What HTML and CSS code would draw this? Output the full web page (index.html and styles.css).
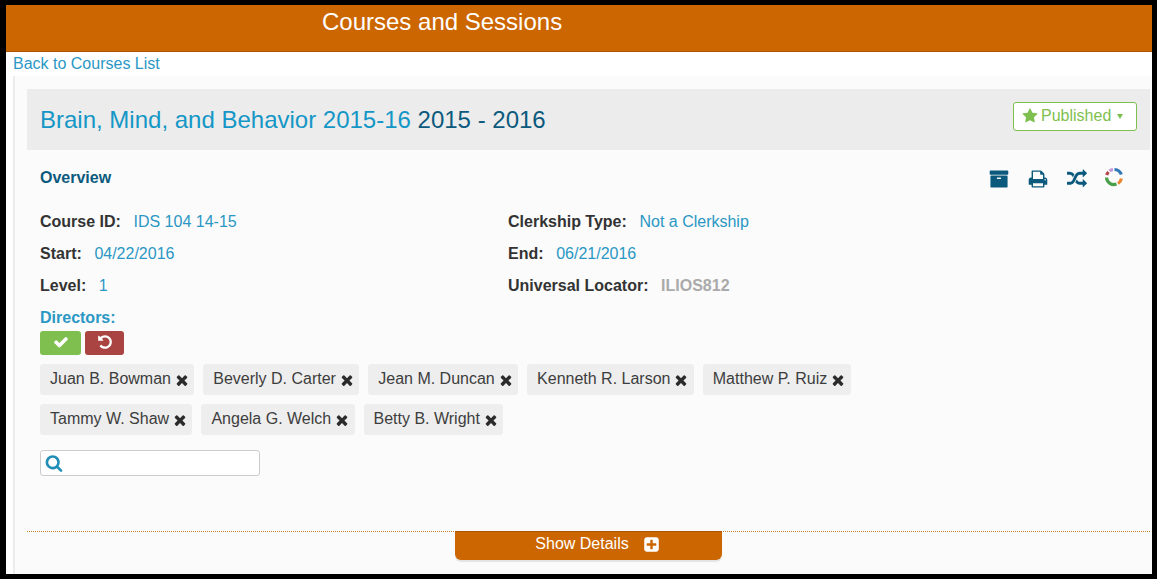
FILE: index.html
```html
<!DOCTYPE html>
<html lang="en">
<head>
    <meta charset="UTF-8">
    <title>Courses and Sessions</title>
    <link rel="stylesheet" href="styles.css">
</head>
<body>
    <svg class="icon-defs" xmlns="http://www.w3.org/2000/svg">
        <symbol id="i-star" viewBox="0 0 1792 1792"><path d="M1728 647q0 22-26 48l-363 354 86 500q1 7 1 20 0 21-10.500 35.500t-30.500 14.500q-19 0-40-12l-449-236-449 236q-22 12-40 12-21 0-31.500-14.500t-10.500-35.500q0-6 2-20l86-500-364-354q-25-27-25-48 0-37 56-46l502-73 225-455q19-41 49-41t49 41l225 455 502 73q56 9 56 46z"/></symbol>
        <symbol id="i-archive" viewBox="0 0 1792 1792"><path d="M1088 832q0-26-19-45t-45-19h-256q-26 0-45 19t-19 45 19 45 45 19h256q26 0 45-19t19-45zm576-192v960q0 26-19 45t-45 19h-1408q-26 0-45-19t-19-45v-960q0-26 19-45t45-19h1408q26 0 45 19t19 45zm64-448v256q0 26-19 45t-45 19h-1536q-26 0-45-19t-19-45v-256q0-26 19-45t45-19h1536q26 0 45 19t19 45z"/></symbol>
        <symbol id="i-print" viewBox="0 0 1792 1792"><path d="M448 1536h896v-256h-896v256zm0-640h896v-384h-160q-40 0-68-28t-28-68v-160h-640v640zm1152 64q0-26-19-45t-45-19-45 19-19 45 19 45 45 19 45-19 19-45zm128 0v416q0 13-9.500 22.500t-22.500 9.500h-224v160q0 40-28 68t-68 28h-960q-40 0-68-28t-28-68v-160h-224q-13 0-22.500-9.500t-9.500-22.500v-416q0-79 56.500-135.500t135.500-56.500h64v-544q0-40 28-68t68-28h672q40 0 88 20t76 48l152 152q28 28 48 76t20 88v256h64q79 0 135.500 56.500t56.500 135.500z"/></symbol>
        <symbol id="i-random" viewBox="0 0 1792 1792"><path d="M666 481q-60 92-137 273-22-45-37-72.500t-40.500-63.500-51-56.500-63-35-81.500-14.500h-224q-14 0-23-9t-9-23v-192q0-14 9-23t23-9h224q250 0 410 225zm1126 799q0 14-9 23l-320 320q-9 9-23 9-13 0-22.500-9.500t-9.500-22.500v-192q-32 0-85 .5t-81 1-73-1-71-5-64-10.500-63-18.500-58-28.500-59-40-55-53.500-56-69.500q59-93 136-273 22 45 37 72.500t40.500 63.500 51 56.500 63 35 81.500 14.500h256v-192q0-14 9-23t23-9q12 0 24 10l319 319q9 9 9 23zm0-896q0 14-9 23l-320 320q-9 9-23 9-13 0-22.500-9.500t-9.500-22.500v-192h-256q-48 0-87 15t-69 45-51 61.500-45 77.500q-32 62-78 171-29 66-49.500 111t-54 105-64 100-74 83-90 68.500-106.500 42-128 16.500h-224q-14 0-23-9t-9-23v-192q0-14 9-23t23-9h224q48 0 87-15t69-45 51-61.500 45-77.500q32-62 78-171 29-66 49.500-111t54-105 64-100 74-83 90-68.500 106.500-42 128-16.500h256v-192q0-14 9-23t23-9q12 0 24 10l319 319q9 9 9 23z"/></symbol>
        <symbol id="i-check" viewBox="0 0 1792 1792"><path d="M1671 566q0 40-28 68l-724 724-136 136q-28 28-68 28t-68-28l-136-136-362-362q-28-28-28-68t28-68l136-136q28-28 68-28t68 28l294 295 656-657q28-28 68-28t68 28l136 136q28 28 28 68z"/></symbol>
        <symbol id="i-undo" viewBox="0 0 1792 1792"><path d="M1664 896q0 156-61 298t-164 245-245 164-298 61q-172 0-327-72.500t-264-204.500q-7-10-6.500-22.500t8.500-20.500l137-138q10-9 25-9 16 2 23 12 73 95 179 147t225 52q104 0 198.500-40.500t163.500-109.500 109.500-163.500 40.500-198.500-40.500-198.500-109.500-163.500-163.500-109.500-198.500-40.500q-98 0-188 35.500t-160 101.500l137 138q31 30 14 69-17 40-59 40h-448q-26 0-45-19t-19-45v-448q0-42 40-59 39-17 69 14l130 129q107-101 244.500-156.500t284.500-55.500q156 0 298 61t245 164 164 245 61 298z"/></symbol>
        <symbol id="i-times" viewBox="0 0 1792 1792"><path d="M1490 1322q0 40-28 68l-136 136q-28 28-68 28t-68-28l-294-294-294 294q-28 28-68 28t-68-28l-136-136q-28-28-28-68t28-68l294-294-294-294q-28-28-28-68t28-68l136-136q28-28 68-28t68 28l294 294 294-294q28-28 68-28t68 28l136 136q28 28 28 68t-28 68l-294 294 294 294q28 28 28 68z"/></symbol>
        <symbol id="i-search" viewBox="0 0 1792 1792"><path d="M1216 832q0-185-131.500-316.500t-316.500-131.500-316.500 131.500-131.500 316.500 131.500 316.500 316.500 131.500 316.500-131.500 131.500-316.500zm512 832q0 52-38 90t-90 38q-54 0-90-38l-343-342q-179 124-399 124-143 0-273.500-55.500t-225-150-150-225-55.500-273.500 55.500-273.500 150-225 225-150 273.500-55.500 273.500 55.500 225 150 150 225 55.500 273.500q0 220-124 399l343 343q37 37 37 90z"/></symbol>
        <symbol id="i-plus" viewBox="0 0 1792 1792"><path d="M1408 960v-128q0-26-19-45t-45-19h-320v-320q0-26-19-45t-45-19h-128q-26 0-45 19t-19 45v320h-320q-26 0-45 19t-19 45v128q0 26 19 45t45 19h320v320q0 26 19 45t45 19h128q26 0 45-19t19-45v-320h320q26 0 45-19t19-45zm256-544v960q0 119-84.500 203.500t-203.500 84.500h-960q-119 0-203.500-84.500t-84.500-203.500v-960q0-119 84.500-203.500t203.500-84.500h960q119 0 203.500 84.500t84.500 203.500z"/></symbol>
    </svg>

    <div class="frame">
        <header class="top-bar">
            <h1 class="top-title">Courses and Sessions</h1>
        </header>
        <a class="back-link" href="#">Back to Courses List</a>

        <main class="course">
            <div class="course-header">
                <h2 class="course-title"><a href="#">Brain, Mind, and Behavior 2015-16</a> <span>2015 - 2016</span></h2>
                <button class="publish-btn">
                    <svg class="ico ico-star"><use href="#i-star"/></svg>
                    Published
                    <span class="caret"></span>
                </button>
            </div>

            <div class="overview">
                <div class="overview-head">
                    <h3 class="overview-title">Overview</h3>
                    <div class="actions">
                        <svg class="ico ico-action"><use href="#i-archive"/></svg>
                        <svg class="ico ico-action"><use href="#i-print"/></svg>
                        <svg class="ico ico-action"><use href="#i-random"/></svg>
                        <svg class="ico-ring" viewBox="0 0 20 20">
                            <g fill="none" stroke-width="3.200">
                                <path d="M10.500 2.500A7.500 7.500 0 0 1 17.300 7.500" stroke="#2f78b5"/>
                                <path d="M17.400 11.500A7.500 7.500 0 0 1 14 16.500" stroke="#e8862e"/>
                                <path d="M12.500 17.100A7.500 7.500 0 0 1 2.500 10.500" stroke="#4aa04a"/>
                                <path d="M2.700 8A7.500 7.500 0 0 1 4.500 5" stroke="#b8404a"/>
                                <path d="M5.500 4A7.500 7.500 0 0 1 9 2.600" stroke="#c79ad6"/>
                            </g>
                        </svg>
                    </div>
                </div>

                <div class="fields">
                    <div class="field"><label>Course ID:</label><span>IDS 104 14-15</span></div>
                    <div class="field"><label>Clerkship Type:</label><span>Not a Clerkship</span></div>
                    <div class="field"><label>Start:</label><span>04/22/2016</span></div>
                    <div class="field"><label>End:</label><span>06/21/2016</span></div>
                    <div class="field"><label>Level:</label><span>1</span></div>
                    <div class="field"><label>Universal Locator:</label><span class="muted">ILIOS812</span></div>
                </div>

                <div class="directors-label">Directors:</div>
                <div class="edit-btns">
                    <button class="btn-save"><svg class="ico"><use href="#i-check"/></svg></button>
                    <button class="btn-cancel"><svg class="ico"><use href="#i-undo"/></svg></button>
                </div>

                <ul class="tags">
                    <li class="tag">Juan B. Bowman <svg class="ico"><use href="#i-times"/></svg></li>
                    <li class="tag">Beverly D. Carter <svg class="ico"><use href="#i-times"/></svg></li>
                    <li class="tag">Jean M. Duncan <svg class="ico"><use href="#i-times"/></svg></li>
                    <li class="tag">Kenneth R. Larson <svg class="ico"><use href="#i-times"/></svg></li>
                    <li class="tag">Matthew P. Ruiz <svg class="ico"><use href="#i-times"/></svg></li>
                    <li class="tag">Tammy W. Shaw <svg class="ico"><use href="#i-times"/></svg></li>
                    <li class="tag">Angela G. Welch <svg class="ico"><use href="#i-times"/></svg></li>
                    <li class="tag">Betty B. Wright <svg class="ico"><use href="#i-times"/></svg></li>
                </ul>

                <div class="search">
                    <svg class="ico"><use href="#i-search"/></svg>
                    <input type="text">
                </div>
            </div>

            <div class="details-bar">
                <button class="details-btn">Show Details <svg class="ico"><use href="#i-plus"/></svg></button>
            </div>
        </main>
    </div>
</body>
</html>
```

FILE: styles.css
```css
* {
    box-sizing: border-box;
}

html, body {
    margin: 0;
    height: 100%;
    background: #fff;
}

body {
    font-family: "Liberation Sans", Arial, sans-serif;
    font-size: 16px;
    color: #333;
    overflow: hidden;
}

.icon-defs {
    display: none;
}

.ico {
    width: 1em;
    height: 1em;
    fill: currentColor;
}

.frame {
    width: 1157px;
    height: 579px;
    border-style: solid;
    border-color: #000;
    border-width: 5px 5px 5px 6px;
    display: flex;
    flex-direction: column;
    overflow: hidden;
}

.top-bar {
    height: 47px;
    flex: none;
    background: #cc6600;
    border-bottom: 1px solid #a85400;
    padding-left: 316px;
}

.top-title {
    margin: 0;
    padding-top: 3px;
    font-size: 24px;
    line-height: 27px;
    font-weight: normal;
    color: #fff;
}

.back-link {
    display: block;
    flex: none;
    height: 24px;
    padding-left: 7px;
    line-height: 23px;
    color: #2a97c4;
    text-decoration: none;
}

.course {
    flex: 1;
    margin-left: 7px;
    padding: 13px 0 0 12px;
    background: #fbfbfb;
    border-left: 2px solid #ececec;
    display: flex;
    flex-direction: column;
    min-height: 0;
}

.course-header {
    height: 61px;
    flex: none;
    margin-right: 2px;
    padding: 0 13px;
    background: #edecec;
    display: flex;
    align-items: center;
    justify-content: space-between;
}

.course-title {
    margin: 0;
    font-size: 24px;
    font-weight: normal;
    color: #0b5a7d;
}

.course-title a {
    color: #1497c6;
    text-decoration: none;
}

.publish-btn {
    height: 29px;
    width: 124px;
    margin-top: -7px;
    padding: 0 8px;
    background: #fff;
    border: 1px solid #7fbf4f;
    border-radius: 3px;
    color: #7fbf4f;
    font: inherit;
    display: flex;
    align-items: center;
    gap: 3px;
}

.caret {
    margin-left: 3px;
    width: 0;
    height: 0;
    border-style: solid;
    border-width: 5px 3px 0;
    border-color: #7fbf4f transparent transparent;
}

.overview {
    flex: 1;
    padding: 0 13px;
    min-height: 0;
}

.overview-head {
    display: flex;
    justify-content: space-between;
    align-items: flex-start;
    height: 56px;
    padding-top: 19px;
}

.overview-title {
    margin: 0;
    font-size: 16px;
    line-height: 18px;
    color: #0b5a7d;
}

.actions {
    display: flex;
    align-items: center;
    gap: 19px;
    padding-right: 15.500px;
    color: #0b5a7d;
}

.ico-action {
    width: 20px;
    height: 20px;
}

.ico-ring {
    width: 20px;
    height: 20px;
    margin: -4px 0 0 -2.500px;
}

.fields {
    display: grid;
    grid-template-columns: 468px 1fr;
    grid-auto-rows: 32px;
}

.field {
    display: flex;
    gap: 12.600px;
    line-height: 32px;
}

.field label {
    font-weight: bold;
}

.field span {
    color: #2a97c4;
}

.field .muted {
    color: #aaa;
    font-weight: bold;
}

.directors-label {
    height: 21px;
    line-height: 32px;
    font-weight: bold;
    color: #2a97c4;
}

.edit-btns {
    display: flex;
    gap: 4px;
    margin-top: 8px;
}

.edit-btns button {
    height: 24px;
    border: none;
    border-radius: 3px;
    color: #fff;
    font-size: 16px;
    display: flex;
    align-items: center;
    justify-content: center;
    padding: 0 0 3px;
}

.btn-save {
    width: 41px;
    background: #7fbf4f;
}

.btn-cancel {
    width: 39px;
    background: #a94442;
}

.tags {
    list-style: none;
    margin: 9px 0 0;
    padding: 0;
    max-width: 830px;
    display: flex;
    flex-wrap: wrap;
    gap: 9px;
}

.tag {
    height: 31px;
    padding: 0 4.300px 2px 10px;
    background: #eeeeee;
    border-radius: 3px;
    display: flex;
    align-items: center;
    gap: 3px;
    white-space: nowrap;
    color: #3d3d3d;
}

.tag .ico {
    color: #2b2b2b;
    margin-top: 3px;
}

.search {
    width: 220px;
    height: 26px;
    margin-top: 15px;
    padding: 0 4px;
    background: #fff;
    border: 1px solid #ccc;
    border-radius: 3px;
    display: flex;
    align-items: center;
    gap: 2px;
    color: #1f8fb8;
}

.search .ico {
    width: 18px;
    height: 18px;
}

.search input {
    flex: 1;
    min-width: 0;
    border: none;
    outline: none;
    background: transparent;
}

.details-bar {
    flex: none;
    height: 43px;
    margin-right: 2px;
    border-top: 1px dotted #c08030;
    display: flex;
    justify-content: center;
}

.details-btn {
    width: 267px;
    height: 29px;
    margin: -1px 0 0 0;
    padding: 0 0 4px 18px;
    border: none;
    border-top: 1px solid #a85400;
    border-radius: 0 0 6px 6px;
    background: #cc6600;
    box-shadow: 0 2px 1px #e4e4e4;
    color: #fff;
    font: inherit;
    display: flex;
    align-items: center;
    justify-content: center;
    gap: 14px;
}

.details-btn .ico {
    width: 17px;
    height: 17px;
}
```
